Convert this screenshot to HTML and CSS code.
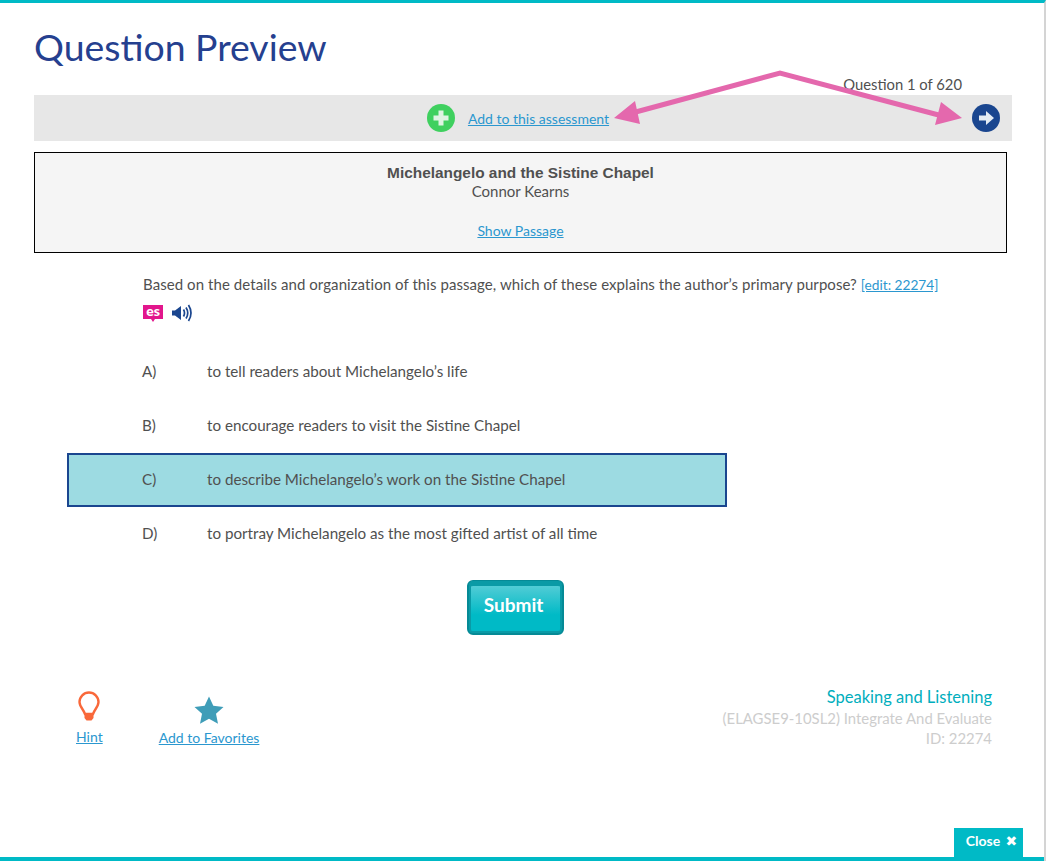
FILE: index.html
```html
<!DOCTYPE html>
<html lang="en">
<head>
<meta charset="utf-8">
<title>Question Preview</title>
<link rel="stylesheet" href="styles.css">
</head>
<body>
<div class="modal">
  <h1 class="title">Question Preview</h1>
  <div class="counter">Question 1 of 620</div>
  <div class="toolbar">
    <div class="add">
      <svg class="round-icon" viewBox="0 0 28 28"><circle cx="14" cy="14" r="14" fill="#3fd05f"/><path d="M11.500 6.500h5v5h5v5h-5v5h-5v-5h-5v-5h5z" fill="#dff3e3"/></svg>
      <a href="#" class="link">Add to this assessment</a>
    </div>
    <svg class="round-icon next" viewBox="0 0 28 28"><circle cx="14" cy="14" r="14" fill="#1a468f"/><path d="M7 11.500h7V7l8 7-8 7v-4.500H7z" fill="#e4ecf4"/></svg>
  </div>
  <section class="passage">
    <div class="passage-title">Michelangelo and the Sistine Chapel</div>
    <div class="passage-author">Connor Kearns</div>
    <a href="#" class="link passage-link">Show Passage</a>
  </section>
  <div class="stem">
    <p class="stem-text">Based on the details and organization of this passage, which of these explains the author’s primary purpose? <a href="#" class="link edit-link">[edit: 22274]</a></p>
    <div class="stem-icons">
      <svg class="es-icon" viewBox="0 0 20 20"><path d="M0 2h20v14h-8l-2 3-2-3H0z" fill="#e2168c"/><text x="10" y="13" text-anchor="middle" class="es-text">es</text></svg>
      <svg class="sound-icon" viewBox="0 0 22 20"><path d="M1 7.500h3L10 3v14l-6-4.500H1z" fill="#1a468f"/><path d="M12.500 6.500q2 3.500 0 7M15 4.500q3.500 5.500 0 11M17.500 2q5 8 0 16" fill="none" stroke="#1a468f" stroke-width="1.700"/></svg>
    </div>
  </div>
  <ul class="answers">
    <li class="answer"><span class="letter">A)</span><span>to tell readers about Michelangelo’s life</span></li>
    <li class="answer"><span class="letter">B)</span><span>to encourage readers to visit the Sistine Chapel</span></li>
    <li class="answer selected"><span class="letter">C)</span><span>to describe Michelangelo’s work on the Sistine Chapel</span></li>
    <li class="answer"><span class="letter">D)</span><span>to portray Michelangelo as the most gifted artist of all time</span></li>
  </ul>
  <div class="submit-row"><button class="submit" type="button">Submit</button></div>
  <footer class="foot">
    <div class="actions">
      <a href="#" class="action hint">
        <svg class="bulb" viewBox="0 0 24 32"><path d="M12 2a9.500 9.500 0 0 0-9.500 9.500c0 4.500 4 7.500 5.500 12h8c1.500-4.500 5.500-7.500 5.500-12A9.500 9.500 0 0 0 12 2z" fill="none" stroke="#f9683a" stroke-width="2.400"/><path d="M7.500 24.500h9v3l-2 2.500h-5l-2-2.500z" fill="#f9683a"/></svg>
        <span class="link">Hint</span>
      </a>
      <a href="#" class="action fav">
        <svg class="star" viewBox="0 0 30 28"><path d="M15 .5l4.300 9.200 10.200 1.200-7.500 6.900 2 10-9-5-9 5 2-10L.5 10.900l10.200-1.200z" fill="#3f9db8"/></svg>
        <span class="link">Add to Favorites</span>
      </a>
    </div>
    <div class="meta">
      <div class="meta-title">Speaking and Listening</div>
      <div>(ELAGSE9-10SL2) Integrate And Evaluate</div>
      <div>ID: 22274</div>
    </div>
  </footer>
  <button class="close" type="button">Close <span class="close-x">✖</span></button>
  <svg class="annot" viewBox="0 0 1046 861" width="1046" height="861">
    <path d="M632 113L780 73L950 118" fill="none" stroke="#e468ad" stroke-width="5" stroke-linejoin="miter"/>
    <path d="M614 118L635 101L640 124z M962 118L941 102L935 125z" fill="#e468ad"/>
  </svg>
</div>
</body>
</html>
```
FILE: styles.css
```css
* { box-sizing: border-box; }
html, body { margin: 0; padding: 0; }
body {
  width: 1046px;
  height: 861px;
  overflow: hidden;
  background: #fff;
  font-family: "Lato", "Noto Sans", sans-serif;
  font-size: 15px;
  color: #505050;
}
.modal {
  position: relative;
  width: 1046px;
  height: 861px;
  padding: 0 34px;
  border-top: 3px solid #00bac6;
  border-right: 2px solid #d4d4d4;
  overflow: hidden;
}
.modal::after {
  content: "";
  position: absolute;
  left: 0;
  right: 0;
  bottom: 0;
  height: 4px;
  background: #00bac6;
}
.title {
  margin: 0;
  padding-top: 23px;
  height: 71px;
  font-size: 37.400px;
  line-height: 42px;
  font-weight: 400;
  color: #25408f;
}
.counter {
  height: 21px;
  padding-right: 48px;
  text-align: right;
  line-height: 20px;
  width: 976px;
  font-size: 14.800px;
}
.link { color: #2b97cf; text-decoration: underline; font-size: 14px; }
.toolbar {
  position: relative;
  display: flex;
  justify-content: center;
  align-items: center;
  width: 978px;
  height: 46px;
  background: #e7e7e7;
}
.add { display: flex; align-items: center; gap: 13px; margin-left: -10px; }
.round-icon { display: block; width: 28px; height: 28px; }
.next { position: absolute; right: 12px; top: 9px; }
.passage {
  display: flex;
  flex-direction: column;
  align-items: center;
  width: 973px;
  height: 101px;
  margin-top: 11px;
  padding-top: 10px;
  border: 1px solid #000;
  background: #f5f5f5;
  line-height: 19px;
}
.passage-title {
  font-family: "Liberation Sans", sans-serif;
  font-weight: 700;
  font-size: 15.400px;
  margin-bottom: 1px;
}
.passage-author { margin-top: -1px; }
.passage-link { margin-top: 20px; }
.stem { padding: 21px 0 0 109px; }
.stem-text { margin: 0; line-height: 20px; width: 830px; letter-spacing: .07px; }
.edit-link { font-size: 13.700px; letter-spacing: 0; }
.stem-icons { display: flex; gap: 8px; align-items: center; margin-top: 8px; height: 20px; }
.es-icon { width: 20px; height: 20px; }
.es-text { font-family: "Lato", sans-serif; font-size: 14px; font-weight: 900; fill: #fff; }
.sound-icon { width: 22px; height: 20px; }
.answers {
  list-style: none;
  margin: 22px 0 0 33px;
  padding: 0;
  width: 660px;
  font-size: 15.200px;
}
.answer {
  display: flex;
  align-items: center;
  height: 54px;
  padding: 0 0 2px 73px;
  border: 2px solid transparent;
}
.selected { background: #9ddbe2; border-color: #1a468f; }
.letter { width: 65px; }
.submit-row { display: flex; justify-content: center; padding: 19px 0 0 0; width: 963px; }
.submit {
  width: 97px;
  height: 55px;
  border: 2px solid #058a96;
  border-top-width: 1px;
  border-radius: 6px;
  padding: 0 4px 5px 0;
  background: linear-gradient(#5fcfd8, #00bac6 65%);
  box-shadow: inset 0 5px 0 #0a9aa6, inset 2px 0 0 #0a9aa6, inset -2px 0 0 #0a9aa6, inset 0 -2px 0 #0a9aa6;
  color: #fff;
  font-family: "Lato", sans-serif;
  font-size: 19px;
  font-weight: 700;
}
.foot {
  display: flex;
  justify-content: space-between;
  align-items: flex-start;
  width: 958px;
  margin-top: 51px;
}
.actions { display: flex; padding: 4px 0 0 42px; gap: 56px; align-items: flex-start; }
.action { display: flex; flex-direction: column; align-items: center; gap: 5px; text-decoration: none; }
.fav { margin-top: 6px; }
.bulb { width: 24px; height: 33px; }
.star { width: 30px; height: 28px; }
.meta { text-align: right; color: #cdcdcd; line-height: 20px; font-size: 14.900px; }
.meta-title { color: #00aebd; font-size: 16.500px; line-height: 22px; }
.close {
  position: absolute;
  right: 21px;
  bottom: 0;
  width: 69px;
  height: 33px;
  border: 0;
  padding: 0 0 9px 6px;
  background: #00bac6;
  color: #fff;
  font-family: "Lato", sans-serif;
  font-size: 14px;
  font-weight: 700;
  z-index: 2;
}
.close-x { font-size: 14px; margin-left: 2px; font-family: "DejaVu Sans", sans-serif; }
.annot { position: absolute; left: 0; top: -3px; pointer-events: none; z-index: 3; }
```
